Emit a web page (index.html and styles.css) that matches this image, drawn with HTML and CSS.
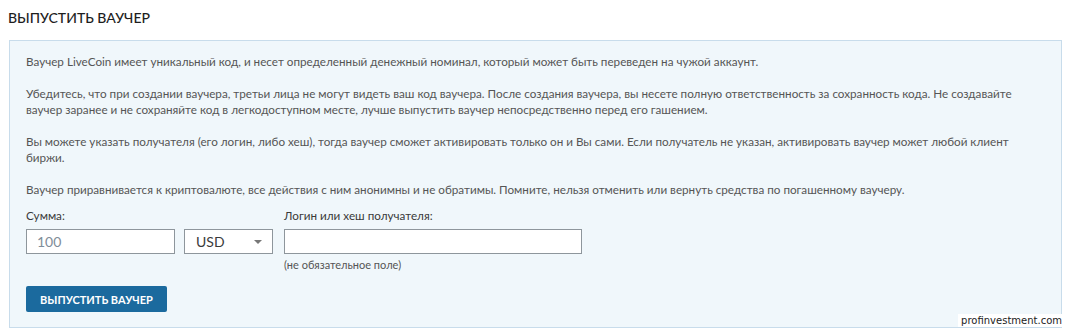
FILE: index.html
```html
<!DOCTYPE html>
<html lang="ru">
<head>
    <meta charset="UTF-8">
    <title>Выпустить ваучер</title>
    <link rel="stylesheet" href="styles.css">
</head>
<body>

<div class="page">
    <h2 class="title">Выпустить ваучер</h2>

    <!-- Блок с описанием и формой -->
    <div class="voucher-box">
        <p>Ваучер LiveCoin имеет уникальный код, и несет определенный денежный номинал, который может быть переведен на чужой аккаунт.</p>
        <p>Убедитесь, что при создании ваучера, третьи лица не могут видеть ваш код ваучера. После создания ваучера, вы несете полную ответственность за сохранность кода. Не создавайте ваучер заранее и не сохраняйте код в легкодоступном месте, лучше выпустить ваучер непосредственно перед его гашением.</p>
        <p>Вы можете указать получателя (его логин, либо хеш), тогда ваучер сможет активировать только он и Вы сами. Если получатель не указан, активировать ваучер может любой клиент биржи.</p>
        <p>Ваучер приравнивается к криптовалюте, все действия с ним анонимны и не обратимы. Помните, нельзя отменить или вернуть средства по погашенному ваучеру.</p>

        <div class="form-row">
            <div class="field">
                <label>Сумма:</label>
                <div class="amount-group">
                    <input type="text" class="input amount" placeholder="100">
                    <div class="select">
                        <span>USD</span>
                        <span class="caret"></span>
                    </div>
                </div>
            </div>
            <div class="field">
                <label>Логин или хеш получателя:</label>
                <input type="text" class="input recipient">
                <div class="hint">(не обязательное поле)</div>
            </div>
        </div>

        <button class="btn">Выпустить ваучер</button>
    </div>

    <div class="watermark">profinvestment.com</div>
</div>

</body>
</html>
```

FILE: styles.css
```css
/* Общие стили */
body {
    margin: 0;
    background-color: #fff;
    font-family: Lato, "Open Sans", sans-serif;
    color: #555;
}

.page {
    position: relative;
    width: 1076px;
    height: 335px;
    overflow: hidden;
}

.title {
    margin: 0;
    padding: 9px 8px 10px;
    font-size: 14px;
    font-weight: 500;
    line-height: 18px;
    text-transform: uppercase;
    color: #1e1e1e;
}

/* Блок ваучера */
.voucher-box {
    margin: 3px 0 0 9px;
    width: 1053px;
    height: 288px;
    box-sizing: border-box;
    padding: 12px 16px 0 16px;
    background-color: #f0f7fb;
    border: 1px solid #c8dceb;
}

.voucher-box p {
    margin: 0 0 16px;
    font-size: 11.7px;
    line-height: 16px;
}

/* Форма */
.form-row {
    display: flex;
    gap: 11px;
    margin-top: -6px;
}

.field label {
    display: block;
    font-size: 11.7px;
    line-height: 16px;
    margin-bottom: 6px;
    color: #3a3a3a;
}

.amount-group {
    display: flex;
    gap: 9px;
}

.input {
    box-sizing: border-box;
    height: 25px;
    border: 1px solid #8e969c;
    background: #fff;
    font-family: inherit;
    font-size: 14px;
    padding: 0 10px;
    margin: 0;
    outline: none;
}

.input::placeholder {
    color: #7f8d99;
}

.amount {
    width: 149px;
}

.recipient {
    width: 298px;
}

.select {
    box-sizing: border-box;
    width: 89px;
    height: 25px;
    border: 1px solid #8e969c;
    background: #fff;
    display: flex;
    align-items: center;
    justify-content: space-between;
    padding: 0 10px 0 11px;
    font-size: 14px;
    color: #3a3a3a;
}

.caret {
    width: 0;
    height: 0;
    border-left: 4px solid transparent;
    border-right: 4px solid transparent;
    border-top: 4px solid #777;
}

.hint {
    font-size: 11px;
    line-height: 14px;
    margin-top: 4px;
}

/* Кнопка */
.btn {
    margin-top: 14px;
    width: 141px;
    height: 26px;
    border: none;
    border-radius: 2px;
    background-color: #1b6a9e;
    color: #fff;
    font-family: inherit;
    font-size: 11px;
    font-weight: 700;
    text-transform: uppercase;
    padding: 0;
    cursor: pointer;
}

.watermark {
    position: absolute;
    right: 14px;
    bottom: 8px;
    font-family: "DejaVu Sans", Verdana, sans-serif;
    font-size: 10px;
    color: #222;
    background: #fff;
    padding: 0 0 0 3px;
    line-height: 13px;
}
```
